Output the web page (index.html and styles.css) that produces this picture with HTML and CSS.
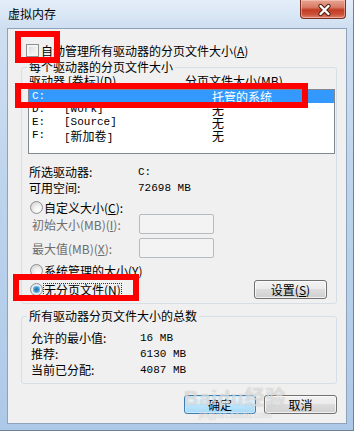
FILE: index.html
```html
<!DOCTYPE html>
<html lang="zh-CN">
<head>
<meta charset="utf-8">
<title>虚拟内存</title>
<link rel="stylesheet" href="styles.css">
</head>
<body>
<div class="window">
  <div class="titlebar">
    <span class="title">虚拟内存</span>
    <div class="close">
      <svg width="46" height="19" viewBox="0 0 46 19">
        <path d="M20.5 6 L28.5 14 M28.5 6 L20.5 14" stroke="#4a2018" stroke-width="4.4" stroke-linecap="round" fill="none"/>
        <path d="M20.5 6 L28.5 14 M28.5 6 L20.5 14" stroke="#ffffff" stroke-width="2.4" stroke-linecap="round" fill="none"/>
      </svg>
    </div>
  </div>
  <div class="client">
    <div class="auto-row">
      <span class="checkbox"></span>
      <span class="check-label">自动管理所有驱动器的分页文件大小(<u>A</u>)</span>
    </div>

    <fieldset class="group g1">
      <legend>每个驱动器的分页文件大小</legend>
      <div class="list-head">
        <span class="h1">驱动器 [卷标](<u>D</u>)</span>
        <span class="h2">分页文件大小(MB)</span>
      </div>
      <div class="list">
        <div class="row sel"><span class="c1 mono">C:</span><span class="c2 mono"></span><span class="c3">托管的系统</span></div>
        <div class="row"><span class="c1 mono">D:</span><span class="c2 mono">[Work]</span><span class="c3">无</span></div>
        <div class="row"><span class="c1 mono">E:</span><span class="c2 mono">[Source]</span><span class="c3">无</span></div>
        <div class="row"><span class="c1 mono">F:</span><span class="c2 mono">[<span class="cjk">新加卷</span>]</span><span class="c3">无</span></div>
      </div>
      <div class="info">
        <div class="kv"><span class="k">所选驱动器:</span><span class="v mono">C:</span></div>
        <div class="kv"><span class="k">可用空间:</span><span class="v mono">72698 MB</span></div>
      </div>
      <div class="radio-row r-custom"><span class="radio"></span><span class="rlabel">自定义大小(<u>C</u>):</span></div>
      <div class="field-row"><span class="flabel">初始大小(MB)(<u>I</u>):</span><span class="textbox"></span></div>
      <div class="field-row f2"><span class="flabel">最大值(MB)(<u>X</u>):</span><span class="textbox"></span></div>
      <div class="radio-row r-sys"><span class="radio"></span><span class="rlabel">系统管理的大小(<u>Y</u>)</span></div>
      <div class="radio-row r-none">
        <span class="radio checked"></span><span class="rlabel focus">无分页文件(<u>N</u>)</span>
        <button class="btn set">设置(<u>S</u>)</button>
      </div>
    </fieldset>

    <fieldset class="group g2">
      <legend>所有驱动器分页文件大小的总数</legend>
      <div class="kv2"><span class="k2">允许的最小值:</span><span class="v mono">16 MB</span></div>
      <div class="kv2"><span class="k2">推荐:</span><span class="v mono">6130 MB</span></div>
      <div class="kv2"><span class="k2">当前已分配:</span><span class="v mono">4087 MB</span></div>
    </fieldset>

    <div class="buttons">
      <button class="btn default">确定</button>
      <button class="btn cancel">取消</button>
    </div>
  </div>

  <div class="watermark"><span class="wm-big">Baidu经验</span><span class="wm-small">jingyan.baidu.com</span></div>

  <div class="mark m1"></div>
  <div class="mark m2"></div>
  <div class="mark m3"></div>
</div>
</body>
</html>
```

FILE: styles.css
```css
html, body {
  margin: 0;
  padding: 0;
  background: #ffffff;
}

body {
  font-family: "Noto Sans CJK SC", sans-serif;
  font-size: 12px;
  color: #000;
}

u {
  text-decoration: underline;
  text-underline-offset: 1px;
}

.window {
  position: relative;
  width: 354px;
  height: 431px;
  box-sizing: border-box;
  background: linear-gradient(to bottom, #e4eef9 0px, #cfdff1 28px, #bcd3ec 200px, #aec9e8 431px);
  box-shadow: inset -1px 0 0 #6c829b, inset 0 -1px 0 #6c829b;
  overflow: hidden;
}

.titlebar {
  height: 28px;
  box-sizing: border-box;
  padding: 7px 0 0 8px;
}

.title {
  display: block;
  line-height: 14px;
  font-size: 12px;
  color: #000;
}

.close {
  position: absolute;
  top: 0;
  right: 8px;
  width: 46px;
  height: 19px;
  box-sizing: border-box;
  border: 1px solid #7b2f22;
  border-top: none;
  border-radius: 0 0 4px 4px;
  background: linear-gradient(to bottom, #e8a493 0%, #d97c66 40%, #c23c25 55%, #cc5038 80%, #de8770 100%);
  box-shadow: inset 0 0 0 1px rgba(255, 220, 210, 0.45);
}

.close svg {
  position: absolute;
  left: -1px;
  top: 0;
}

.client {
  margin-left: 7px;
  width: 340px;
  height: 396px;
  box-sizing: border-box;
  border: 1px solid #8ea3bb;
  background: #f0f0f0;
}

/* auto manage checkbox */
.auto-row {
  display: flex;
  align-items: center;
  margin-top: 15px;
  padding-left: 18px;
  height: 13px;
}

.checkbox {
  width: 13px;
  height: 13px;
  box-sizing: border-box;
  border: 1px solid #8f8f8f;
  background: linear-gradient(135deg, #d2d2d2 0%, #e8e8e8 45%, #fbfbfb 100%);
  box-shadow: inset 0 0 0 2px #f4f4f4;
  flex: none;
}

.check-label {
  margin-left: 2px;
  line-height: 13px;
  white-space: nowrap;
}

/* group boxes */
.group {
  margin: 0 0 0 13px;
  padding: 0;
  width: 316px;
  box-sizing: border-box;
  border: 1px solid #d5dfe5;
  border-radius: 3px;
  min-width: 0;
}

.group legend {
  margin-left: 5px;
  padding: 0 2px;
  font-size: 12px;
  line-height: 12px;
}

.g1 {
  margin-top: 4px;
  padding-bottom: 4px;
}

.g2 {
  margin-top: 6px;
  padding-top: 8px;
  padding-bottom: 5px;
}

.list-head {
  display: flex;
  margin-top: 2px;
  padding-left: 7px;
  height: 12px;
  line-height: 12px;
  white-space: nowrap;
}

.h1 {
  width: 156px;
  flex: none;
}

.list {
  margin: 2px 0 0 6px;
  width: 307px;
  height: 65px;
  box-sizing: border-box;
  border: 1px solid #828790;
  background: #ffffff;
}

.row {
  display: flex;
  height: 13px;
  line-height: 13px;
  padding-left: 3px;
  white-space: nowrap;
}

.row.sel {
  background: #3399ff;
  color: #ffffff;
}

.c1 {
  width: 32px;
  flex: none;
}

.c2 {
  width: 148px;
  flex: none;
}

.mono {
  font-family: "Liberation Mono", "Noto Sans CJK SC", monospace;
  font-size: 11px;
}

.cjk {
  font-family: "Noto Sans CJK SC", sans-serif;
  font-size: 12px;
}

.info {
  margin-top: 10px;
  padding-left: 7px;
}

.kv {
  display: flex;
  line-height: 16px;
  height: 16px;
  white-space: nowrap;
}

.k {
  width: 109px;
  flex: none;
}

/* radios */
.radio-row {
  display: flex;
  align-items: center;
  padding-left: 8px;
  height: 13px;
  white-space: nowrap;
}

.r-custom {
  margin-top: 5px;
}

.r-sys {
  margin-top: 6px;
}

.r-none {
  margin-top: 3px;
  height: 19px;
}

.radio {
  width: 13px;
  height: 13px;
  box-sizing: border-box;
  border-radius: 50%;
  border: 1px solid #8e8f8f;
  background: radial-gradient(circle at 65% 70%, #ffffff 0%, #f0f0f0 40%, #c9c9c9 100%);
  flex: none;
  position: relative;
}

.radio.checked {
  background: radial-gradient(circle at 50% 50%, #2b6ea0 0px, #3d8fc9 2px, #8ac8ef 3.6px, #e9f2f8 4px, #d6d6d6 100%);
}

.rlabel {
  margin-left: 1px;
  line-height: 13px;
}

.focus {
  margin-left: 0;
  border: 1px dotted #333;
  line-height: 11px;
  padding: 0;
}

.field-row {
  display: flex;
  align-items: center;
  padding-left: 10px;
  height: 20px;
  color: #6d6d6d;
  white-space: nowrap;
}

.f2 {
  margin-top: 4px;
}

.flabel {
  width: 107px;
  flex: none;
}

.textbox {
  width: 75px;
  height: 20px;
  box-sizing: border-box;
  border: 1px solid #b6bbbf;
  border-radius: 2px;
  background: #f3f3f3;
  flex: none;
}

/* buttons */
.btn {
  font-family: "Noto Sans CJK SC", sans-serif;
  font-size: 12px;
  color: #000;
  height: 19px;
  padding: 0;
  margin: 0;
  box-sizing: border-box;
  border: 1px solid #707070;
  border-radius: 3px;
  background: linear-gradient(to bottom, #f2f2f2 0%, #ebebeb 49%, #dddddd 50%, #cfcfcf 100%);
  box-shadow: inset 0 0 0 1px rgba(255, 255, 255, 0.7);
  line-height: 15px;
  white-space: nowrap;
}

.set {
  margin-left: auto;
  margin-right: 9px;
  width: 73px;
}

.g2 .kv2 {
  display: flex;
  padding-left: 9px;
  height: 16px;
  line-height: 16px;
  white-space: nowrap;
}

.k2 {
  width: 109px;
  flex: none;
}

.buttons {
  display: flex;
  justify-content: flex-end;
  gap: 8px;
  margin-top: 11px;
  padding-right: 9px;
}

.default {
  width: 72px;
  border-color: #3c7fb1;
  background: linear-gradient(to bottom, #eaf6fd 0%, #d9f0fc 49%, #bee6fd 50%, #a7d9f5 100%);
  box-shadow: inset 0 0 0 1px #cdeafc;
}

.cancel {
  width: 73px;
}

/* watermark */
.watermark {
  position: absolute;
  left: 184px;
  top: 386px;
  display: flex;
  flex-direction: column;
  align-items: center;
  pointer-events: none;
}

.wm-big {
  font-family: "Liberation Sans", "Noto Sans CJK SC", sans-serif;
  font-weight: bold;
  font-size: 20px;
  line-height: 24px;
  color: rgba(255, 255, 255, 0.55);
  text-shadow: 0 0 1px rgba(120, 120, 120, 0.5);
  letter-spacing: 1px;
}

.wm-small {
  font-family: "Liberation Sans", sans-serif;
  font-size: 9px;
  line-height: 10px;
  color: rgba(255, 255, 255, 0.5);
  text-shadow: 0 0 1px rgba(120, 120, 120, 0.4);
}

/* red annotation boxes */
.mark {
  position: absolute;
  box-sizing: border-box;
  border: 6px solid #ff0000;
}

.m1 {
  left: 15px;
  top: 31px;
  width: 45px;
  height: 32px;
}

.m2 {
  left: 15px;
  top: 83px;
  width: 293px;
  height: 25px;
}

.m3 {
  left: 13px;
  top: 274px;
  width: 126px;
  height: 27px;
}
```
